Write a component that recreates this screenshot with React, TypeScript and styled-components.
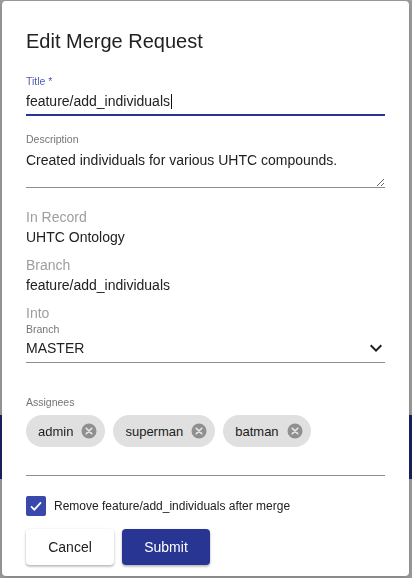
import React from 'react';
import styled, {createGlobalStyle} from "styled-components";

const GlobalStyle = createGlobalStyle`
    html, body {
        margin: 0;
        padding: 0;
        background-color: #9e9e9e;
        font-family: "Liberation Sans", Arial, sans-serif;
    }
`;

const Page = styled.div`
    height: 578px;
    padding-top: 415px;
    box-sizing: border-box;
    overflow: hidden;
`;

const NavBand = styled.div`
    height: 64px;
    background-color: #1c2161;
`;

const Backdrop = styled.div`
    position: fixed;
    inset: 0;
    padding: 1px 3px 2px 2px;
    display: flex;
    align-items: flex-start;
`;

const Dialog = styled.div`
    width: 407px;
    box-sizing: border-box;
    background-color: white;
    border-radius: 4px;
    box-shadow: 0 2px 6px rgba(0, 0, 0, 0.2);
    padding: 24px 24px 11px 24px;
    display: flex;
    flex-direction: column;
    color: #212121;
`;

const DialogTitle = styled.h2`
    margin: 0;
    font-size: 20px;
    line-height: 32px;
    font-weight: 500;
    color: #212121;
`;

const Field = styled.div<{ $top: number }>`
    margin-top: ${p => p.$top}px;
    display: flex;
    flex-direction: column;
`;

const SmallLabel = styled.label<{ $color?: string }>`
    font-size: 10.5px;
    line-height: 12px;
    color: ${p => p.$color || '#757575'};
`;

const InputBox = styled.div<{ $focused?: boolean; $gap: number }>`
    margin-top: ${p => p.$gap}px;
    display: flex;
    align-items: center;
    height: 19px;
    font-size: 14px;
    line-height: 19px;
    color: #212121;
    padding-bottom: ${p => p.$focused ? 3 : 4}px;
    border-bottom: ${p => p.$focused ? '2px solid #283593' : '1px solid #8e8e8e'};
`;

const Caret = styled.span`
    display: inline-block;
    width: 1px;
    height: 15px;
    margin-left: 1px;
    background-color: #111;
`;

const TextAreaWrap = styled.div`
    margin-top: 6px;
    border-bottom: 1px solid #8e8e8e;
    display: flex;
`;

const TextArea = styled.textarea`
    flex: 1;
    height: 36px;
    box-sizing: border-box;
    margin: 0;
    padding: 0;
    border: 0;
    outline: none;
    resize: vertical;
    font-family: "Liberation Sans", Arial, sans-serif;
    font-size: 14px;
    line-height: 19px;
    color: #212121;
    background: transparent;
`;

const ReadOnly = styled.div<{ $top: number }>`
    margin-top: ${p => p.$top}px;
    font-size: 14px;
    line-height: 20px;
`;

const ReadLabel = styled.div`
    color: #9e9e9e;
`;

const ReadValue = styled.div`
    color: #212121;
`;

const SelectValue = styled.span`
    flex: 1;
`;

const ChevronIcon = styled.svg`
    width: 24px;
    height: 24px;
    margin: -3px -3px -2px 0;
    fill: #212121;
`;

const ChipInput = styled.div`
    margin-top: 7px;
    padding-bottom: 28px;
    border-bottom: 1px solid #8e8e8e;
    display: flex;
    gap: 8px;
`;

const Chip = styled.div`
    display: inline-flex;
    align-items: center;
    gap: 8px;
    height: 32px;
    padding: 0 8px 0 12px;
    border-radius: 16px;
    background-color: #e0e0e0;
    font-size: 13px;
    color: #212121;
`;

const CheckRow = styled.div`
    margin-top: 20px;
    display: flex;
    align-items: center;
    gap: 8px;
    font-size: 12px;
    color: #212121;
`;

const CheckBox = styled.span`
    width: 20px;
    height: 20px;
    border-radius: 2px;
    background-color: #3949ab;
    display: inline-flex;
    align-items: center;
    justify-content: center;
`;

const Actions = styled.div`
    margin-top: 13px;
    display: flex;
    gap: 8px;
`;

const Button = styled.button<{ $primary?: boolean }>`
    width: 88px;
    height: 36px;
    border: 0;
    border-radius: 4px;
    font-family: "Liberation Sans", Arial, sans-serif;
    font-size: 14px;
    cursor: pointer;
    background-color: ${p => p.$primary ? '#283593' : 'white'};
    color: ${p => p.$primary ? 'white' : '#212121'};
    box-shadow: 0 1px 3px rgba(0, 0, 0, 0.22), 0 2px 2px rgba(0, 0, 0, 0.12);
`;

function DeleteIcon() {
    return <svg width="16" height="16" viewBox="0 0 16 16">
        <circle cx="8" cy="8" r="7.5" fill="#8f8f8f"/>
        <path d="M5.3 5.3 L10.7 10.7 M10.7 5.3 L5.3 10.7" stroke="#e0e0e0" strokeWidth="1.8" strokeLinecap="round"/>
    </svg>;
}

const assignees = ['admin', 'superman', 'batman'];

function App() {
    return <>
        <GlobalStyle/>
        <Page>
            <NavBand/>
        </Page>
        <Backdrop>
            <Dialog>
                <DialogTitle>Edit Merge Request</DialogTitle>

                <Field $top={18}>
                    <SmallLabel $color={'#4f5db5'}>Title *</SmallLabel>
                    <InputBox $focused $gap={5}>feature/add_individuals<Caret/></InputBox>
                </Field>

                <Field $top={17}>
                    <SmallLabel>Description</SmallLabel>
                    <TextAreaWrap>
                        <TextArea defaultValue={'Created individuals for various UHTC compounds.'}/>
                    </TextAreaWrap>
                </Field>

                <ReadOnly $top={19}>
                    <ReadLabel>In Record</ReadLabel>
                    <ReadValue>UHTC Ontology</ReadValue>
                </ReadOnly>
                <ReadOnly $top={8}>
                    <ReadLabel>Branch</ReadLabel>
                    <ReadValue>feature/add_individuals</ReadValue>
                </ReadOnly>
                <ReadOnly $top={8}>
                    <ReadLabel>Into</ReadLabel>
                </ReadOnly>
                <Field $top={0}>
                    <SmallLabel>Branch</SmallLabel>
                    <InputBox $gap={4}>
                        <SelectValue>MASTER</SelectValue>
                        <ChevronIcon viewBox="0 0 24 24">
                            <path d="M16.59 8.59 12 13.17 7.41 8.59 6 10l6 6 6-6z"/>
                        </ChevronIcon>
                    </InputBox>
                </Field>

                <Field $top={33}>
                    <SmallLabel>Assignees</SmallLabel>
                    <ChipInput>
                        {assignees.map(name => <Chip key={name}>{name}<DeleteIcon/></Chip>)}
                    </ChipInput>
                </Field>

                <CheckRow>
                    <CheckBox>
                        <svg width="16" height="16" viewBox="0 0 24 24">
                            <path d="M4.5 12.5 L9.5 17.5 L19.5 6.5" fill="none" stroke="white" strokeWidth="2.6"/>
                        </svg>
                    </CheckBox>
                    Remove feature/add_individuals after merge
                </CheckRow>

                <Actions>
                    <Button>Cancel</Button>
                    <Button $primary>Submit</Button>
                </Actions>
            </Dialog>
        </Backdrop>
    </>;
}

export default App;
